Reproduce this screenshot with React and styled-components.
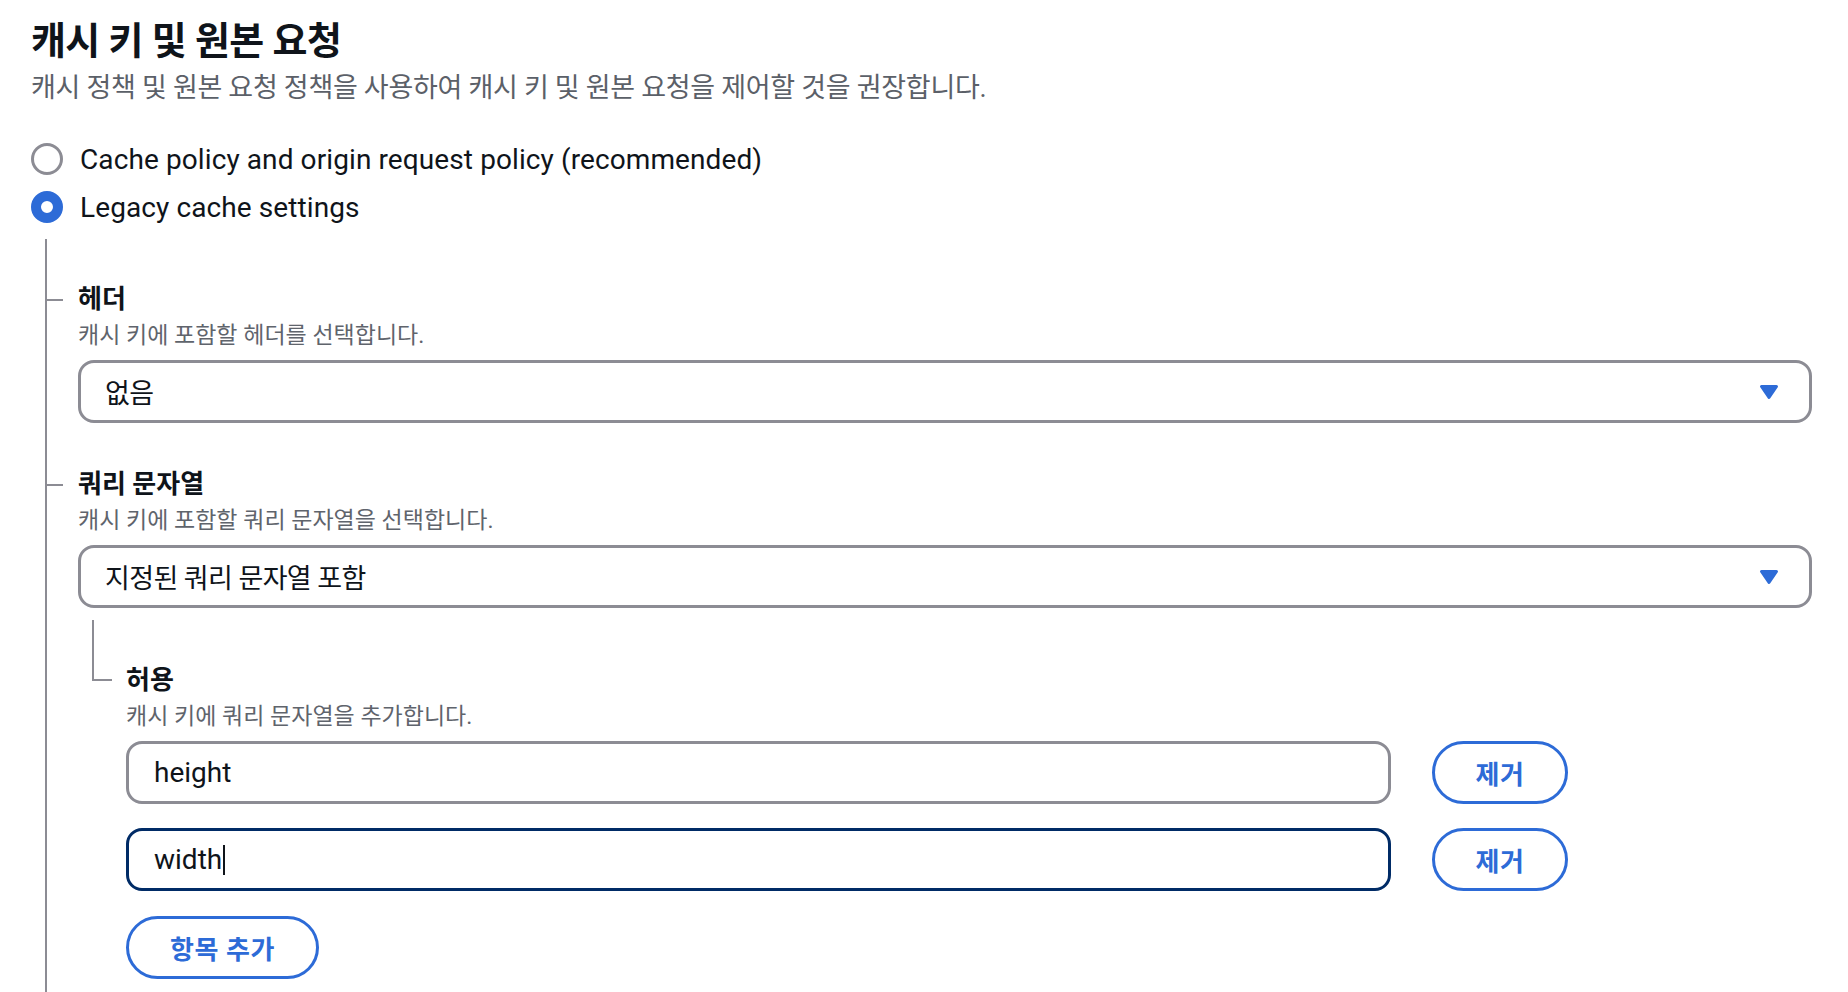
import React from 'react'
import styled, { createGlobalStyle } from 'styled-components'

// cache key / origin request section (legacy settings open)

const GlobalStyle = createGlobalStyle`
  html, body {
    margin: 0;
    padding: 0;
    background: #ffffff;
  }
  body {
    font-family: Roboto, "Noto Sans CJK KR", "Noto Sans", sans-serif;
    color: #0f141a;
  }
`

const Page = styled.div`
  box-sizing: border-box;
  min-height: 992px;
  padding: 19px 36px 0 31px;
`

const Title = styled.h2`
  margin: 0;
  font-size: 38px;
  line-height: 44px;
  font-weight: 700;
  letter-spacing: -0.6px;
`

const Lead = styled.p`
  margin: 8px 0 0;
  font-size: 27px;
  line-height: 34px;
  color: #5b6068;
  letter-spacing: -0.3px;
`

const RadioGroup = styled.div`
  margin-top: 30px;
  display: flex;
  flex-direction: column;
`

const RadioRow = styled.label`
  display: flex;
  align-items: center;
  gap: 17px;
  height: 48px;
  font-size: 28px;
  letter-spacing: 0.1px;
  cursor: pointer;
`

const RadioDot = styled.span`
  box-sizing: border-box;
  flex: 0 0 32px;
  width: 32px;
  height: 32px;
  border-radius: 50%;
  background: #ffffff;
  border: ${p => (p.$checked ? '10px solid #2d6bd7' : '3px solid #8c8c94')};
`

const Branch = styled.div`
  margin: 8px 0 0 14px;
  padding: 42px 0 40px 31px;
  border-left: 2px solid #8c8c94;
  min-height: 700px;
  box-sizing: border-box;
`

const Field = styled.div`
  & + & {
    margin-top: 43px;
  }
`

const Label = styled.div`
  position: relative;
  font-size: 26px;
  line-height: 36px;
  font-weight: 700;

  &::before {
    content: '';
    position: ${p => (p.$tick ? 'absolute' : 'static')};
    display: ${p => (p.$tick ? 'block' : 'none')};
    left: -33px;
    top: 18px;
    width: 18px;
    border-top: 2px solid #8c8c94;
  }
`

const Hint = styled.div`
  margin-top: 4px;
  font-size: 23px;
  line-height: 30px;
  color: #5f646c;
`

const Select = styled.div`
  box-sizing: border-box;
  margin-top: 9px;
  height: 63px;
  display: flex;
  align-items: center;
  justify-content: space-between;
  padding: 0 30px 0 24px;
  border: 3px solid #8c8c94;
  border-radius: 16px;
  font-size: 27px;
  letter-spacing: -0.6px;
`

const SubBranch = styled.div`
  position: relative;
  margin: 12px 0 0 14px;
  padding: 42px 0 0 34px;

  &::before {
    content: '';
    position: absolute;
    left: 0;
    top: 0;
    width: 18px;
    height: 59px;
    border-left: 2px solid #8c8c94;
    border-bottom: 2px solid #8c8c94;
  }
`

const Rows = styled.div`
  margin-top: 9px;
  display: flex;
  flex-direction: column;
  gap: 24px;
`

const EntryRow = styled.div`
  display: grid;
  grid-template-columns: 1265px 136px;
  column-gap: 41px;
`

const TextBox = styled.div`
  box-sizing: border-box;
  height: 63px;
  display: flex;
  align-items: center;
  padding: 0 25px;
  border: 3px solid ${p => (p.$focused ? '#002b66' : '#8c8c94')};
  border-radius: 16px;
  font-size: 28px;
`

const Caret = styled.span`
  display: inline-block;
  width: 2px;
  height: 30px;
  margin-left: 1px;
  background: #0f141a;
`

const PillButton = styled.button`
  box-sizing: border-box;
  height: 63px;
  width: ${p => p.$width || 'auto'};
  padding: ${p => (p.$width ? '0' : '0 41px')};
  border: 3px solid #2d6bd7;
  border-radius: 32px;
  background: #ffffff;
  color: #2d6bd7;
  font-family: Roboto, "Noto Sans CJK KR", sans-serif;
  font-size: 26px;
  font-weight: 700;
  letter-spacing: 0.6px;
  white-space: nowrap;
  cursor: pointer;
  justify-self: start;
`

const AddRow = styled.div`
  margin-top: 1px;
`

function Arrow() {
  return (
    <svg width="20" height="16" viewBox="0 0 20 16">
      <path
        d="M2.5 2.5 L17.5 2.5 L10 13.5 Z"
        fill="#2d6bd7"
        stroke="#2d6bd7"
        strokeWidth="3"
        strokeLinejoin="round"
      />
    </svg>
  )
}

const entries = [
  { value: 'height', focused: false },
  { value: 'width', focused: true },
]

export default function App() {
  return (
    <Page>
      <GlobalStyle />
      <Title>캐시 키 및 원본 요청</Title>
      <Lead>캐시 정책 및 원본 요청 정책을 사용하여 캐시 키 및 원본 요청을 제어할 것을 권장합니다.</Lead>

      <RadioGroup>
        <RadioRow>
          <RadioDot />
          Cache policy and origin request policy (recommended)
        </RadioRow>
        <RadioRow>
          <RadioDot $checked />
          Legacy cache settings
        </RadioRow>
      </RadioGroup>

      <Branch>
        <Field>
          <Label $tick>헤더</Label>
          <Hint>캐시 키에 포함할 헤더를 선택합니다.</Hint>
          <Select>
            <span>없음</span>
            <Arrow />
          </Select>
        </Field>

        <Field>
          <Label $tick>쿼리 문자열</Label>
          <Hint>캐시 키에 포함할 쿼리 문자열을 선택합니다.</Hint>
          <Select>
            <span>지정된 쿼리 문자열 포함</span>
            <Arrow />
          </Select>

          <SubBranch>
            <Label>허용</Label>
            <Hint>캐시 키에 쿼리 문자열을 추가합니다.</Hint>
            <Rows>
              {entries.map(e => (
                <EntryRow key={e.value}>
                  <TextBox $focused={e.focused}>
                    {e.value}
                    {e.focused && <Caret />}
                  </TextBox>
                  <PillButton $width="136px">제거</PillButton>
                </EntryRow>
              ))}
              <AddRow>
                <PillButton>항목 추가</PillButton>
              </AddRow>
            </Rows>
          </SubBranch>
        </Field>
      </Branch>
    </Page>
  )
}
